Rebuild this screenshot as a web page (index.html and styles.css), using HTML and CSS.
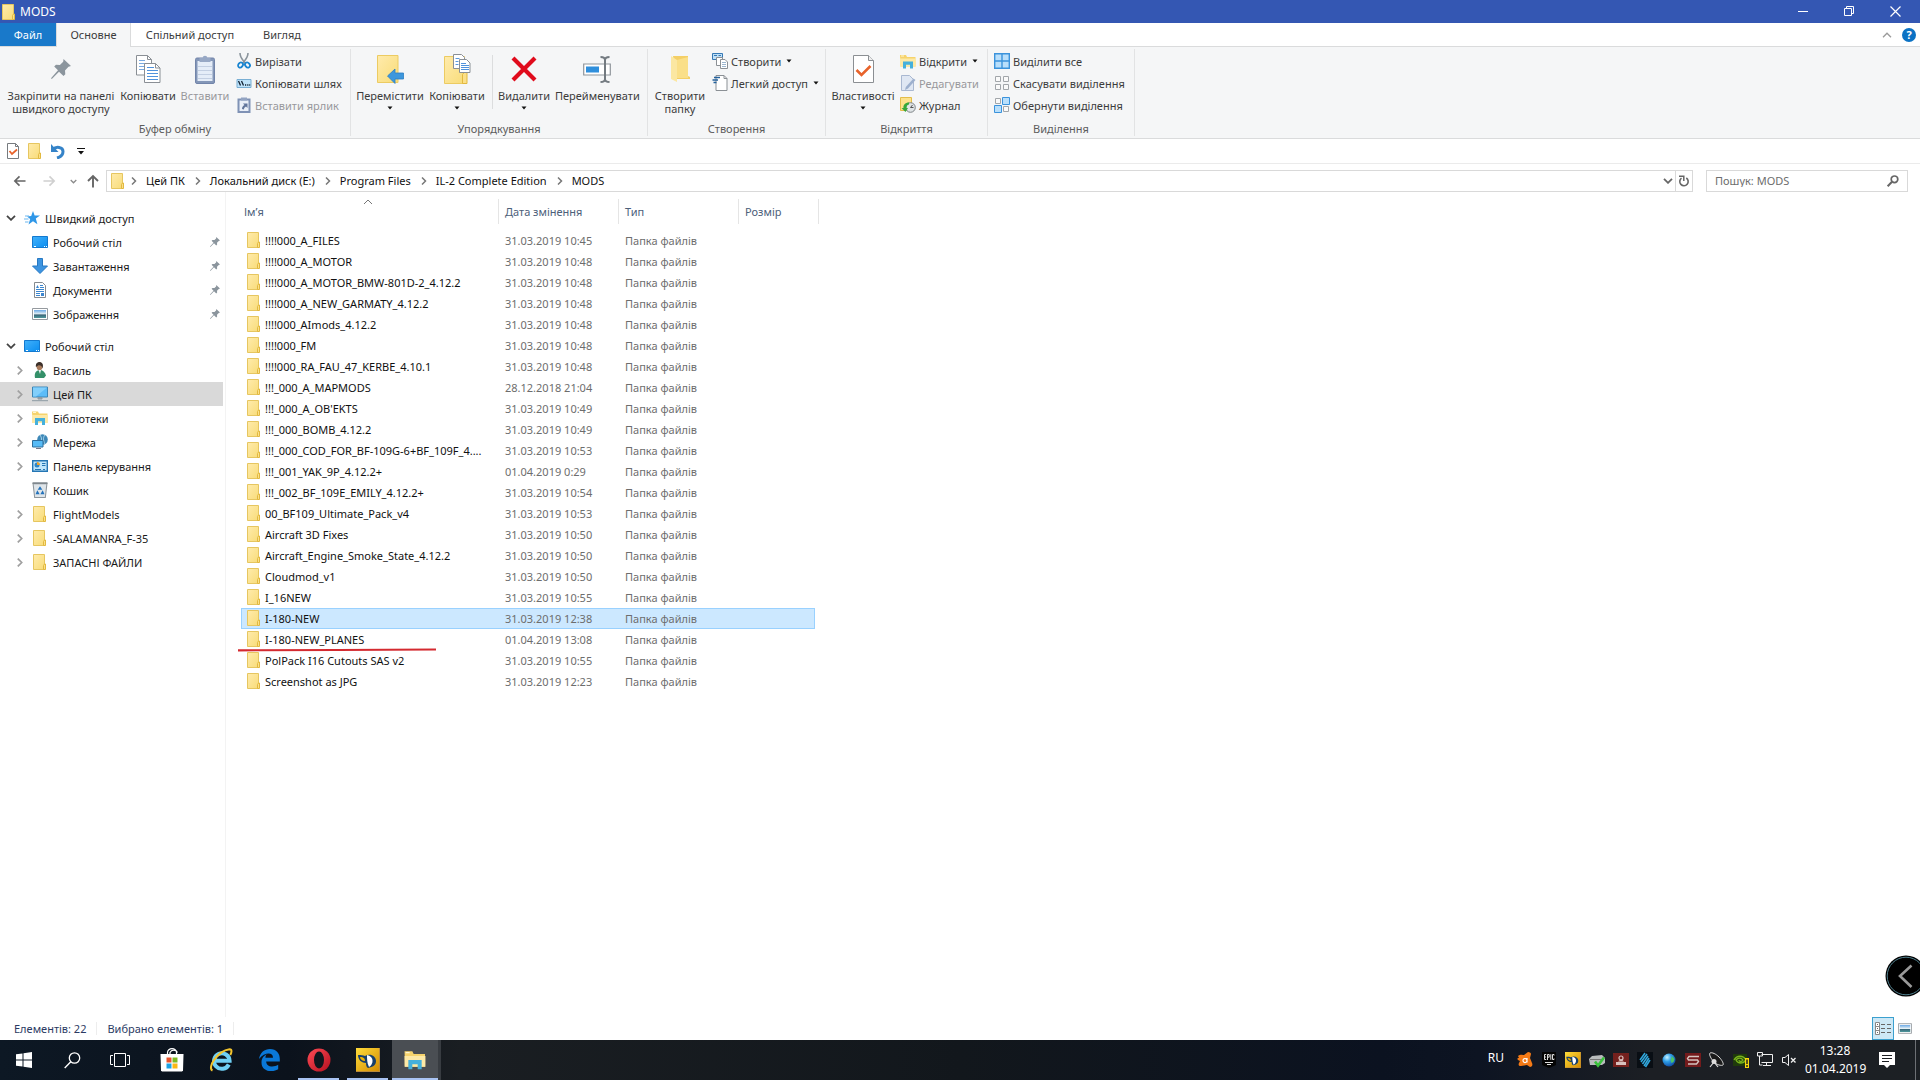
FILE: index.html
```html
<!DOCTYPE html>
<html lang="uk">
<head>
<meta charset="utf-8">
<meta name="viewport" content="width=device-width, initial-scale=1">
<title>MODS</title>
<link rel="stylesheet" href="styles.css">
</head>
<body>
<svg class="defs" aria-hidden="true">
  <defs>
    <linearGradient id="gFold" x1="0" y1="0" x2="1" y2="1"><stop offset="0" stop-color="#ffebac"/><stop offset="1" stop-color="#f8dc79"/></linearGradient>
    <linearGradient id="gBlue" x1="0" y1="0" x2="1" y2="1"><stop offset="0" stop-color="#41b1fb"/><stop offset="1" stop-color="#0a8df0"/></linearGradient>
    <linearGradient id="gPic" x1="0" y1="0" x2="0" y2="1"><stop offset="0" stop-color="#6aa9e6"/><stop offset=".5" stop-color="#e6f1f5"/><stop offset=".6" stop-color="#3a6478"/><stop offset="1" stop-color="#4f9a9c"/></linearGradient>
    <linearGradient id="gOpera" x1="0" y1="0" x2="1" y2="1"><stop offset="0" stop-color="#ff4b55"/><stop offset="1" stop-color="#b3101f"/></linearGradient>
    <linearGradient id="gGold" x1="0" y1="0" x2="1" y2="1"><stop offset="0" stop-color="#ffdc3a"/><stop offset="1" stop-color="#d28a00"/></linearGradient>
    <radialGradient id="gGlobe" cx=".35" cy=".3" r=".8"><stop offset="0" stop-color="#c9f3ff"/><stop offset=".4" stop-color="#2f9fe8"/><stop offset="1" stop-color="#0a3f9a"/></radialGradient>
  </defs>
  <symbol id="folder" viewBox="0 0 14 16"><path d="M.5.500h11v15H.5z" fill="url(#gFold)" stroke="#e6c660"/><path d="M10.500 15.500v-4l1-1.500h1v5.500z" fill="#fbe08a" stroke="#e2b93f"/></symbol>
  <symbol id="chev" viewBox="0 0 8 8"><path d="M2 0.500 5.500 4 2 7.500" fill="none" stroke="currentColor" stroke-width="1.500"/></symbol>
  <symbol id="chevdown" viewBox="0 0 10 6"><path d="M1 .8 5 4.800 9 .8" fill="none" stroke="currentColor" stroke-width="1.800"/></symbol>
  <symbol id="drop" viewBox="0 0 6 4"><path d="M.5.500h5L3 3.500z" fill="#111"/></symbol>
  <symbol id="pin" viewBox="0 0 20 20"><path d="M12.500 0 20 7l-2.500.8-3.500 3.700.3 3.700-1.800 1.800-4.500-4.300L.8 20 0 19.200 7 11.300 3.200 7.500 5 5.800l3.900.3L12.200 2.800z" fill="#8b959d"/></symbol>
  <symbol id="copy" viewBox="0 0 25 28"><path d="M.5.500h11l4 4v15.500H.5z" fill="#fff" stroke="#8a8f95"/><path d="M11.500.500v4h4" fill="none" stroke="#8a8f95"/><path d="M3 5.500h6M3 8.500h6M3 11.500h6M3 14.500h6" stroke="#7aaae0"/><path d="M8.500 8.500h11l4.500 4.500v14.500H8.500z" fill="#fff" stroke="#8a8f95"/><path d="M19.500 8.500v4.500H24" fill="none" stroke="#8a8f95"/><path d="M11 12.500h7M11 15.500h11M11 18.500h11M11 21.500h11M11 24.500h11" stroke="#4f92dc"/></symbol>
  <symbol id="paste" viewBox="0 0 20 29"><rect x=".5" y="3" width="19" height="25.500" rx="1.500" fill="#8497b8" stroke="#7285aa"/><path d="M2.500 6h15v20h-15z" fill="#e5edf8"/><path d="M3 11.500h14M3 15.500h14M3 19.500h14M3 23.500h14" stroke="#c3cfe2"/><path d="M4.500 3h3.200a2.300 2.300 0 0 1 4.600 0h3.200v4h-11z" fill="#97a8c5"/></symbol>
  <symbol id="cut" viewBox="0 0 14 16"><path d="M3 0c0 5 3 7 5.500 10.500M11 0c0 5-3 7-5.500 10.500" fill="none" stroke="#8a949c" stroke-width="1.600"/><ellipse cx="3.500" cy="12" rx="2.200" ry="2.700" fill="none" stroke="#1784d0" stroke-width="1.800" transform="rotate(40 3.500 12)"/><ellipse cx="10.500" cy="12" rx="2.200" ry="2.700" fill="none" stroke="#1784d0" stroke-width="1.800" transform="rotate(-40 10.500 12)"/></symbol>
  <symbol id="path" viewBox="0 0 15 9"><path d="M.5.500h14v8H.5z" fill="#bfe3fa" stroke="#79afd4"/><path d="m2 2 2 4.500M5 2l2 4.500" stroke="#123" stroke-width="1.300"/><path d="M8.500 6h1.200M10.700 6h1.200M12.700 6h1" stroke="#123" stroke-width="1.300"/></symbol>
  <symbol id="plink" viewBox="0 0 14 16"><path d="M1.500 2.500h11v12.500h-11z" fill="#e9eff8" stroke="#7f92b5" stroke-width="2"/><path d="M4 .5h6v3H4z" fill="#93a4c2"/><path d="M5 12c0-2 .7-3 2.500-4L6 6.500h4.500V11L9 9.500C7.500 10.500 7 11 7 12.500z" fill="#61759b"/></symbol>
  <symbol id="moveto" viewBox="0 0 27 29"><path d="M.5.500h20.500v27H.5z" fill="url(#gFold)" stroke="#eccb62"/><path d="M10.500 21 18 14v4h8.500v6H18v4.500z" fill="#3d97dd" stroke="#2c7fc4" stroke-width=".8"/></symbol>
  <symbol id="copyto" viewBox="0 0 27 30"><path d="M.5 2.500h20v27H.5z" fill="url(#gFold)" stroke="#eccb62"/><path d="M18.500 29.500v-9l2-2.500h2.500v11.500z" fill="#fbe08a" stroke="#e2b93f"/><path d="M9.500.500h8l3 3v11h-11z" fill="#fff" stroke="#8a8f95"/><path d="M11.500 4.500h4M11.500 7.500h3M11.500 10.500h3" stroke="#5a98dc"/><path d="M15.500 5.500h7l3.500 3.500v9.500H15.500z" fill="#fff" stroke="#8a8f95"/><path d="M17 9.500h5M17 11.500h8M17 13.500h8M17 15.500h8" stroke="#4f92dc"/></symbol>
  <symbol id="delete" viewBox="0 0 26 26"><path d="m2 2 22 22M24 2 2 24" stroke="#e00b1c" stroke-width="4.200"/></symbol>
  <symbol id="rename" viewBox="0 0 28 27"><path d="M.7 8h26.600v11H.7z" fill="#fff" stroke="#8f959b" stroke-width="1.200"/><path d="M3 10.500h13v6H3z" fill="#2f8fdc"/><path d="M17.500 1c3 0 4.500.8 4.500 3v19c0 2.200-1.500 3-4.500 3M26.500 1C23.500 1 22 1.800 22 4v19c0 2.200 1.500 3 4.500 3" fill="none" stroke="#737a80" stroke-width="2"/></symbol>
  <symbol id="newfold" viewBox="0 0 20 28"><path d="M3 1h15v20l2 1v2H6z" fill="#f4cf66"/><path d="M1 1l6 4v22L1 24z" fill="#fbe7a2"/><path d="M7 5 18 2v21H7z" fill="#fadf88"/></symbol>
  <symbol id="newitem" viewBox="0 0 16 16"><path d="M.5.500h10v6H.5z" fill="#bfe0f7" stroke="#3779b5"/><path d="M2 2.500h3M6.500 2.500H9" stroke="#3779b5"/><path d="M4.500 4.500h6v8h-6z" fill="#fff" stroke="#8b9095"/><path d="M8.500 6.500h4.500l2.500 2.500v6.500h-7z" fill="#fff" stroke="#8b9095"/><path d="M10 9.500h4M10 11.500h4M10 13.500h4" stroke="#9cb6cf"/></symbol>
  <symbol id="easy" viewBox="0 0 15 16"><path d="M3.500.500h8l3 3v12h-11z" fill="#fff" stroke="#8b9095"/><path d="M11.500.500v3h3" fill="none" stroke="#8b9095"/><path d="M1.500 2.500h6M0 5h5.500M1 7.500h3" stroke="#24629c" stroke-width="1.400"/></symbol>
  <symbol id="props" viewBox="0 0 21 28"><path d="M.5.500h15l5 5v22H.5z" fill="#fff" stroke="#8b8f93"/><path d="M15.500.500v5h5" fill="#eee" stroke="#8b8f93"/><path d="m3.500 15 5 5L17.500 11" fill="none" stroke="#e8632b" stroke-width="2.600"/></symbol>
  <symbol id="props-s" viewBox="0 0 12 16"><path d="M.5.500h8l3 3v12H.5z" fill="#fff" stroke="#777b7f"/><path d="M8.500.500v3h3" fill="none" stroke="#777b7f"/><path d="m2.500 8 2.500 3 5-4.500" fill="none" stroke="#e8632b" stroke-width="1.800"/></symbol>
  <symbol id="lib" viewBox="0 0 16 15"><path d="M0 1h6l1 2h8.500v9.500H.5z" fill="#f6d36c"/><path d="M1 2h3" stroke="#fff6cf"/><path d="M0 4.500h16v8H0z" fill="#fde9a6"/><path d="M3 14.500V7.500h10v7h-3v-3.800H6v3.800z" fill="#45b0dc"/></symbol>
  <symbol id="edit" viewBox="0 0 16 16"><path d="M1.500.500h8l4 4v11h-12z" fill="#dfe7f3" stroke="#a9b8d1"/><path d="M13.500 3.500 15.500 5 8 13.500 5 15l.8-3z" fill="#9db0ce"/></symbol>
  <symbol id="history" viewBox="0 0 16 16"><path d="M.5.500h11v13H.5z" fill="#fce28c" stroke="#e3bd4b"/><circle cx="10.500" cy="10.500" r="4.800" fill="#dfe4e6" stroke="#7e8487"/><path d="m10.500 10.500 2-2.500M10.500 10.500h3" stroke="#555"/><path d="M9 5.500C5 5.500 3 8 3.500 11H1.500l4 4 2.500-4H6.500c0-2 .5-3 2.500-3.500z" fill="#35a83a"/></symbol>
  <symbol id="selall" viewBox="0 0 16 16"><path d="M.7.700h14.600v14.600H.7zM8 .7v14.600M.7 8h14.600" fill="#b9dffb" stroke="#3b93dc" stroke-width="1.400"/></symbol>
  <symbol id="selnone" viewBox="0 0 16 16"><path d="M1.500 1.500h5v5h-5zM9.500 1.500h5v5h-5zM1.500 9.500h5v5h-5zM9.500 9.500h5v5h-5z" fill="#fafafa" stroke="#a2a6aa"/></symbol>
  <symbol id="selinv" viewBox="0 0 16 16"><path d="M1.500 1.500h5v5h-5zM9.500 9.500h5v5h-5z" fill="#fafafa" stroke="#a2a6aa"/><path d="M8.500.500h7v7h-7zM.5 8.500h7v7h-7z" fill="#b9dffb" stroke="#3b93dc"/></symbol>
  <symbol id="undo" viewBox="0 0 14 15"><path d="M2 5.500c3-3.500 10-2.500 10 2 0 3-2.500 5.500-6 6.500" fill="none" stroke="#3583c8" stroke-width="3"/><path d="M0 0v8h7.500z" fill="#3583c8"/></symbol>
  <symbol id="arrow" viewBox="0 0 14 12"><path d="M13.500 6H2M7 1 2 6l5 5" fill="none" stroke="currentColor" stroke-width="1.800"/></symbol>
  <symbol id="arrow-r" viewBox="0 0 14 12"><path d="M.5 6H12M7 1l5 5-5 5" fill="none" stroke="currentColor" stroke-width="1.800"/></symbol>
  <symbol id="star" viewBox="0 0 16 14"><path d="m9 0 1.600 4.600H16l-4.200 3 1.600 5.700L9 10.200l-4.500 3.300 1.700-5.400L3 5.500l4.200-.6z" fill="#2f97e8"/><path d="M1 5h4M0 8h4.500M1 11h3.500" stroke="#6db8f0" stroke-width="1.200"/></symbol>
  <symbol id="desk" viewBox="0 0 16 12"><path d="M.5.500h15v11H.5z" fill="url(#gBlue)" stroke="#1379cf"/><path d="M2 10.500h2M12 10.500h1M14 10.500h1" stroke="#fff"/></symbol>
  <symbol id="down" viewBox="0 0 16 16"><path d="M5.500.500h5v7.500h5L8 15.500.5 8h5z" fill="#3d94e0" stroke="#2679c3"/></symbol>
  <symbol id="doc" viewBox="0 0 12 16"><path d="M.5.500h8l3 3v12H.5z" fill="#fff" stroke="#858a8f"/><path d="M6 3.500h3M6 5.500h4M2 7.500h8M2 9.500h8M2 11.500h4M2 13.500h4" stroke="#3b86cf"/><path d="m2 6 1.500-3L5 6M7 11h3v3H7z" fill="#3b86cf"/></symbol>
  <symbol id="pic" viewBox="0 0 16 12"><path d="M.5.500h15v11H.5z" fill="#fff" stroke="#959a9f"/><path d="M2 2h12v8H2z" fill="url(#gPic)"/></symbol>
  <symbol id="user" viewBox="0 0 12 16"><path d="M1 16c-1-5 1-7.500 4.500-8C9 8 11 10 12 13.500L10 16z" fill="#349069"/><ellipse cx="5.500" cy="4.300" rx="3" ry="4" fill="#a97b5c"/><path d="M2 5C1 1.500 4-.5 6.500.2 9 .6 9.500 4 8.300 6.500 8 4 7 3 4.500 3.200z" fill="#3b302b"/><path d="m4.500 8 1.500 4 1-4z" fill="#eee"/></symbol>
  <symbol id="pc" viewBox="0 0 16 15"><path d="M.5.500h15v10H.5z" fill="#5cbcf8" stroke="#3c85b5"/><path d="M1 1h14L4 10H1z" fill="#82cffb"/><path d="M6 11h4v1.500H6zM0 14.200h16" fill="#97a5ae" stroke="#8d9aa3"/></symbol>
  <symbol id="net" viewBox="0 0 16 16"><circle cx="10.500" cy="5.500" r="5.300" fill="#3d88b8"/><path d="M8 1c2 3 2 5 0 8M13 1c-2 2-2 5 0 9" fill="none" stroke="#a9d3e8"/><path d="M.5 6.500h10.500v6.500H.5z" fill="#57bbf6" stroke="#2f6e9c"/><path d="M4 14.500h5" stroke="#778"/></symbol>
  <symbol id="cpl" viewBox="0 0 16 12"><path d="M.7.700h14.600v10.600H.7z" fill="#bfe5fb" stroke="#2476b4" stroke-width="1.400"/><circle cx="5" cy="5" r="2.500" fill="#2d86c8"/><path d="M5 5V2a3 3 0 0 1 3 3z" fill="#f0a22b"/><path d="M10 3.500h3.500M10 5.500h3.500M3 9.500h6M11 9.500h2" stroke="#2476b4"/></symbol>
  <symbol id="bin" viewBox="0 0 14 15"><path d="M.5 1.500h13L12 14.500H2z" fill="#dfe5e9" stroke="#8d959b"/><path d="M0 1h14" stroke="#7d858b" stroke-width="1.500"/><path d="m7 4 2.200 3.200H4.800zM2.800 11.500 4.500 7.700l2.200 3.800zM11.200 11.500 9.500 7.700l-2.200 3.800z" fill="#2372bb"/></symbol>
  <symbol id="parrot" viewBox="0 0 24 24"><path d="M0 0h24v24H0z" fill="url(#gGold)"/><path d="M23.500 0v23.500H0" fill="none" stroke="#b98a3a"/><path d="M2 7c3 0 5 0 7 1 5-3 11 0 11 5 0 4-3 6-8 7-2-1-2-4-2-5-4 0-8-3-8-8z" fill="#173f6b"/><path d="M11 7c7 1 7 9 2 12-2-4-2-8-2-12z" fill="#fff"/><path d="M4 9c4 0 5 2 5 4-3 0-5-2-5-4z" fill="#f0b400"/></symbol>
</svg>

<div class="window">
  <header class="titlebar">
    <svg class="i-folder"><use href="#folder"/></svg>
    <h1 class="title">MODS</h1>
    <div class="winctl">
      <button aria-label="Згорнути"><svg width="11" height="11"><path d="M0 5.500h10" stroke="#fff"/></svg></button>
      <button aria-label="Відновити"><svg width="11" height="11"><path d="M.5 2.500h7v7h-7zM2.500 2.500v-2h7v7h-2" fill="none" stroke="#fff"/></svg></button>
      <button aria-label="Закрити"><svg width="11" height="11"><path d="m.5.500 10 10M10.500.500l-10 10" stroke="#fff" stroke-width="1.200"/></svg></button>
    </div>
  </header>

  <nav class="tabs">
    <button class="tab file">Файл</button>
    <button class="tab active">Основне</button>
    <button class="tab share">Спільний доступ</button>
    <button class="tab view">Вигляд</button>
    <div class="tabs-end">
      <svg class="collapse" viewBox="0 0 10 6"><path d="M1 5.200 5 1.200l4 4" fill="none" stroke="#9a9a9a" stroke-width="1.300"/></svg>
      <button class="help" aria-label="Довідка">?</button>
    </div>
  </nav>

  <div class="ribbon">
    <section class="group g-clip">
      <div class="tools">
        <button class="big w116"><svg class="pinicon"><use href="#pin"/></svg><span>Закріпити на панелі<br>швидкого доступу</span></button>
        <button class="big w58"><svg width="25" height="28"><use href="#copy"/></svg><span>Копіювати</span></button>
        <button class="big w56 off"><svg width="20" height="29"><use href="#paste"/></svg><span>Вставити</span></button>
        <div class="stack">
          <button class="small"><svg width="16" height="16"><use href="#cut"/></svg>Вирізати</button>
          <button class="small"><svg width="16" height="9"><use href="#path"/></svg>Копіювати шлях</button>
          <button class="small off"><svg width="16" height="16"><use href="#plink"/></svg>Вставити ярлик</button>
        </div>
      </div>
      <h2>Буфер обміну</h2>
    </section>
    <section class="group g-org">
      <div class="tools">
        <button class="big w72"><svg width="27" height="29"><use href="#moveto"/></svg><span>Перемістити</span><svg class="drop"><use href="#drop"/></svg></button>
        <button class="big w62"><svg width="27" height="30"><use href="#copyto"/></svg><span>Копіювати</span><svg class="drop"><use href="#drop"/></svg></button>
        <i class="rule"></i>
        <button class="big w62"><svg width="26" height="26"><use href="#delete"/></svg><span>Видалити</span><svg class="drop"><use href="#drop"/></svg></button>
        <button class="big w84"><svg width="28" height="27"><use href="#rename"/></svg><span>Перейменувати</span></button>
      </div>
      <h2>Упорядкування</h2>
    </section>
    <section class="group g-new">
      <div class="tools">
        <button class="big w58"><svg width="20" height="28"><use href="#newfold"/></svg><span>Створити<br>папку</span></button>
        <div class="stack">
          <button class="small"><svg width="16" height="16"><use href="#newitem"/></svg>Створити<svg class="drop"><use href="#drop"/></svg></button>
          <button class="small"><svg width="16" height="16"><use href="#easy"/></svg>Легкий доступ<svg class="drop"><use href="#drop"/></svg></button>
        </div>
      </div>
      <h2>Створення</h2>
    </section>
    <section class="group g-open">
      <div class="tools">
        <button class="big w68"><svg width="21" height="28"><use href="#props"/></svg><span>Властивості</span><svg class="drop"><use href="#drop"/></svg></button>
        <div class="stack">
          <button class="small"><svg width="16" height="15"><use href="#lib"/></svg>Відкрити<svg class="drop"><use href="#drop"/></svg></button>
          <button class="small off"><svg width="16" height="16"><use href="#edit"/></svg>Редагувати</button>
          <button class="small"><svg width="16" height="16"><use href="#history"/></svg>Журнал</button>
        </div>
      </div>
      <h2>Відкриття</h2>
    </section>
    <section class="group g-sel">
      <div class="tools">
        <div class="stack">
          <button class="small"><svg width="16" height="16"><use href="#selall"/></svg>Виділити все</button>
          <button class="small"><svg width="16" height="16"><use href="#selnone"/></svg>Скасувати виділення</button>
          <button class="small"><svg width="16" height="16"><use href="#selinv"/></svg>Обернути виділення</button>
        </div>
      </div>
      <h2>Виділення</h2>
    </section>
  </div>

  <div class="quick">
    <button aria-label="Властивості"><svg width="12" height="16"><use href="#props-s"/></svg></button>
    <button aria-label="Створити папку"><svg class="i-folder"><use href="#folder"/></svg></button>
    <button aria-label="Скасувати"><svg width="14" height="15"><use href="#undo"/></svg></button>
    <button aria-label="Настроїти панель"><svg width="8" height="7"><path d="M0 .5h8" stroke="#111"/><path d="M1 3h6L4 6.500z" fill="#111"/></svg></button>
  </div>

  <div class="address">
    <div class="moves">
      <button class="back" aria-label="Назад"><svg width="13" height="12"><use href="#arrow"/></svg></button>
      <button class="fwd" aria-label="Вперед"><svg width="13" height="12"><use href="#arrow-r"/></svg></button>
      <button class="recent" aria-label="Останні розташування"><svg width="7" height="5"><use href="#chevdown"/></svg></button>
      <button class="up" aria-label="Вгору"><svg width="14" height="14" viewBox="0 0 14 14"><path d="M7 13.500V2M2 7l5-5 5 5" fill="none" stroke="currentColor" stroke-width="1.900"/></svg></button>
    </div>
    <div class="crumbs">
      <svg class="i-folder"><use href="#folder"/></svg>
      <svg class="sep first"><use href="#chev"/></svg><a href="#">Цей ПК</a>
      <svg class="sep"><use href="#chev"/></svg><a href="#">Локальний диск (E:)</a>
      <svg class="sep"><use href="#chev"/></svg><a href="#">Program Files</a>
      <svg class="sep"><use href="#chev"/></svg><a href="#">IL-2 Complete Edition</a>
      <svg class="sep"><use href="#chev"/></svg><a href="#">MODS</a>
      <button class="hist" aria-label="Попередні розташування"><svg width="10" height="6"><use href="#chevdown"/></svg></button>
      <button class="reload" aria-label="Оновити"><svg width="12" height="12" viewBox="0 0 12 12"><path d="M8.300 3A4.200 4.200 0 1 1 3.500 3.100" fill="none" stroke="#666" stroke-width="1.600"/><path d="M1 1.200h4.800V6" fill="none" stroke="#666" stroke-width="1.500"/></svg></button>
    </div>
    <label class="search">
      <input type="search" placeholder="Пошук: MODS" aria-label="Пошук: MODS">
      <svg width="12" height="12" viewBox="0 0 12 12"><circle cx="7.500" cy="4.300" r="3.300" fill="none" stroke="#666" stroke-width="1.700"/><path d="M5 6.800.7 11.300" stroke="#666" stroke-width="2"/></svg>
    </label>
  </div>

  <div class="main">
    <nav class="tree">
      <a href="#" class="node top"><svg class="exp open"><use href="#chevdown"/></svg><svg class="ico"><use href="#star"/></svg>Швидкий доступ</a>
      <a href="#" class="node"><i class="exp"></i><svg class="ico"><use href="#desk"/></svg>Робочий стіл<svg class="pin"><use href="#pin"/></svg></a>
      <a href="#" class="node"><i class="exp"></i><svg class="ico"><use href="#down"/></svg>Завантаження<svg class="pin"><use href="#pin"/></svg></a>
      <a href="#" class="node"><i class="exp"></i><svg class="ico"><use href="#doc"/></svg>Документи<svg class="pin"><use href="#pin"/></svg></a>
      <a href="#" class="node"><i class="exp"></i><svg class="ico"><use href="#pic"/></svg>Зображення<svg class="pin"><use href="#pin"/></svg></a>
      <a href="#" class="node top second"><svg class="exp open"><use href="#chevdown"/></svg><svg class="ico"><use href="#desk"/></svg>Робочий стіл</a>
      <a href="#" class="node"><svg class="exp"><use href="#chev"/></svg><svg class="ico"><use href="#user"/></svg>Василь</a>
      <a href="#" class="node current"><svg class="exp"><use href="#chev"/></svg><svg class="ico"><use href="#pc"/></svg>Цей ПК</a>
      <a href="#" class="node"><svg class="exp"><use href="#chev"/></svg><svg class="ico"><use href="#lib"/></svg>Бібліотеки</a>
      <a href="#" class="node"><svg class="exp"><use href="#chev"/></svg><svg class="ico"><use href="#net"/></svg>Мережа</a>
      <a href="#" class="node"><svg class="exp"><use href="#chev"/></svg><svg class="ico"><use href="#cpl"/></svg>Панель керування</a>
      <a href="#" class="node"><i class="exp"></i><svg class="ico"><use href="#bin"/></svg>Кошик</a>
      <a href="#" class="node"><svg class="exp"><use href="#chev"/></svg><svg class="ico"><use href="#folder"/></svg>FlightModels</a>
      <a href="#" class="node"><svg class="exp"><use href="#chev"/></svg><svg class="ico"><use href="#folder"/></svg>-SALAMANRA_F-35</a>
      <a href="#" class="node"><svg class="exp"><use href="#chev"/></svg><svg class="ico"><use href="#folder"/></svg>ЗАПАСНІ ФАЙЛИ</a>
    </nav>

    <section class="files">
      <table>
        <colgroup><col class="c-name"><col class="c-date"><col class="c-type"><col class="c-size"></colgroup>
        <thead><tr><th>Ім’я<svg class="sort" viewBox="0 0 10 6"><path d="M1 5 5 1l4 4" fill="none" stroke="#777"/></svg></th><th>Дата змінення</th><th>Тип</th><th>Розмір</th></tr></thead>
        <tbody>
          <tr><td><svg class="i-folder"><use href="#folder"/></svg>!!!!000_A_FILES</td><td>31.03.2019 10:45</td><td>Папка файлів</td><td></td></tr>
          <tr><td><svg class="i-folder"><use href="#folder"/></svg>!!!!000_A_MOTOR</td><td>31.03.2019 10:48</td><td>Папка файлів</td><td></td></tr>
          <tr><td><svg class="i-folder"><use href="#folder"/></svg>!!!!000_A_MOTOR_BMW-801D-2_4.12.2</td><td>31.03.2019 10:48</td><td>Папка файлів</td><td></td></tr>
          <tr><td><svg class="i-folder"><use href="#folder"/></svg>!!!!000_A_NEW_GARMATY_4.12.2</td><td>31.03.2019 10:48</td><td>Папка файлів</td><td></td></tr>
          <tr><td><svg class="i-folder"><use href="#folder"/></svg>!!!!000_AImods_4.12.2</td><td>31.03.2019 10:48</td><td>Папка файлів</td><td></td></tr>
          <tr><td><svg class="i-folder"><use href="#folder"/></svg>!!!!000_FM</td><td>31.03.2019 10:48</td><td>Папка файлів</td><td></td></tr>
          <tr><td><svg class="i-folder"><use href="#folder"/></svg>!!!!000_RA_FAU_47_KERBE_4.10.1</td><td>31.03.2019 10:48</td><td>Папка файлів</td><td></td></tr>
          <tr><td><svg class="i-folder"><use href="#folder"/></svg>!!!_000_A_MAPMODS</td><td>28.12.2018 21:04</td><td>Папка файлів</td><td></td></tr>
          <tr><td><svg class="i-folder"><use href="#folder"/></svg>!!!_000_A_OB'EKTS</td><td>31.03.2019 10:49</td><td>Папка файлів</td><td></td></tr>
          <tr><td><svg class="i-folder"><use href="#folder"/></svg>!!!_000_BOMB_4.12.2</td><td>31.03.2019 10:49</td><td>Папка файлів</td><td></td></tr>
          <tr><td><svg class="i-folder"><use href="#folder"/></svg>!!!_000_COD_FOR_BF-109G-6+BF_109F_4....</td><td>31.03.2019 10:53</td><td>Папка файлів</td><td></td></tr>
          <tr><td><svg class="i-folder"><use href="#folder"/></svg>!!!_001_YAK_9P_4.12.2+</td><td>01.04.2019 0:29</td><td>Папка файлів</td><td></td></tr>
          <tr><td><svg class="i-folder"><use href="#folder"/></svg>!!!_002_BF_109E_EMILY_4.12.2+</td><td>31.03.2019 10:54</td><td>Папка файлів</td><td></td></tr>
          <tr><td><svg class="i-folder"><use href="#folder"/></svg>00_BF109_Ultimate_Pack_v4</td><td>31.03.2019 10:53</td><td>Папка файлів</td><td></td></tr>
          <tr><td><svg class="i-folder"><use href="#folder"/></svg>Aircraft 3D Fixes</td><td>31.03.2019 10:50</td><td>Папка файлів</td><td></td></tr>
          <tr><td><svg class="i-folder"><use href="#folder"/></svg>Aircraft_Engine_Smoke_State_4.12.2</td><td>31.03.2019 10:50</td><td>Папка файлів</td><td></td></tr>
          <tr><td><svg class="i-folder"><use href="#folder"/></svg>Cloudmod_v1</td><td>31.03.2019 10:50</td><td>Папка файлів</td><td></td></tr>
          <tr><td><svg class="i-folder"><use href="#folder"/></svg>I_16NEW</td><td>31.03.2019 10:55</td><td>Папка файлів</td><td></td></tr>
          <tr class="selected"><td><svg class="i-folder"><use href="#folder"/></svg>I-180-NEW</td><td>31.03.2019 12:38</td><td>Папка файлів</td><td></td></tr>
          <tr><td><svg class="i-folder"><use href="#folder"/></svg>I-180-NEW_PLANES<svg class="mark" viewBox="0 0 198 4"><path d="M0 2.300 100 2l98-.500" fill="none" stroke="#d42a30" stroke-width="2.200"/></svg></td><td>01.04.2019 13:08</td><td>Папка файлів</td><td></td></tr>
          <tr><td><svg class="i-folder"><use href="#folder"/></svg>PolPack I16 Cutouts SAS v2</td><td>31.03.2019 10:55</td><td>Папка файлів</td><td></td></tr>
          <tr><td><svg class="i-folder"><use href="#folder"/></svg>Screenshot as JPG</td><td>31.03.2019 12:23</td><td>Папка файлів</td><td></td></tr>
        </tbody>
      </table>
    </section>
  </div>

  <footer class="status">
    <span>Елементів: 22</span><span>Вибрано елементів: 1</span>
    <div class="views">
      <button class="on" aria-label="Таблиця"><svg width="17" height="13"><path d="M.5.500h4v12h-4zM.5 4.500h4M.5 8.500h4" fill="#fff" stroke="#888"/><path d="M2 2.500h1M2 6.500h1M2 10.500h1M6 2.500h4M12 2.500h4M6 6.500h4M12 6.500h4M6 10.500h4M12 10.500h4" stroke="#666"/></svg></button>
      <button aria-label="Великі ескізи"><svg width="14" height="11"><use href="#pic"/></svg></button>
    </div>
  </footer>
  <button class="flyout" aria-label="Показати панель"><svg width="42" height="42"><circle cx="21" cy="21" r="20.500" fill="#000"/><circle cx="21" cy="21" r="18.800" fill="none" stroke="#4f7f8d"/><path d="M26.500 10.500 15 21l11.500 11" fill="none" stroke="#999" stroke-width="2.600"/></svg></button>
</div>

<div class="taskbar">
  <button class="task w48" aria-label="Пуск"><svg width="16" height="16"><path d="m0 2.300 6.500-.9v6.100H0zM7.500 1.200 16 0v7.500H7.500zM0 8.500h6.500v6.100L0 13.700zM7.500 8.500H16V16l-8.500-1.200z" fill="#fff"/></svg></button>
  <button class="task w48" aria-label="Пошук"><svg width="17" height="17"><circle cx="10.500" cy="6" r="5.200" fill="none" stroke="#fff" stroke-width="1.300"/><path d="M6.800 9.800.7 16" stroke="#fff" stroke-width="1.400"/></svg></button>
  <button class="task w48" aria-label="Подання завдань"><svg width="20" height="14"><path d="M4.500.500h11v13h-11zM3 2.500H.5v9H3M17 2.500h2.500v9H17" fill="none" stroke="#fff"/></svg></button>
  <div class="apps">
    <button class="task" aria-label="Store"><svg width="24" height="24"><path d="M7.500 6V4.500a4.500 3.800 0 0 1 9 0V6M10 6V4.500a4 3.500 0 0 1 7.500 0" fill="none" stroke="#fff" stroke-width="1.200"/><path d="M.5 6h23l-.5 16.500-1 1H2l-1-1z" fill="#fff"/><path d="M6.500 9.500h5v5h-5z" fill="#e8532b"/><path d="M12.500 9.500h5v5h-5z" fill="#7dba22"/><path d="M6.500 15.500h5v5h-5z" fill="#1ba2e4"/><path d="M12.500 15.500h5v5h-5z" fill="#fcb714"/></svg></button>
    <button class="task" aria-label="Internet Explorer"><svg width="24" height="24"><path d="M19.800 16.500a7.800 7.800 0 1 1 .8-3.700H7" fill="none" stroke="#6fd0f5" stroke-width="4"/><path d="M3.500 22.500C-2 20 8 3 20.500 1.200c3 0 2 3.300.8 5.800" fill="none" stroke="#f2c42e" stroke-width="2"/></svg></button>
    <button class="task" aria-label="Edge"><svg width="21" height="22"><path d="M0 10C1 3.500 5.500 0 11 0c6.500 0 9.800 4.500 9.800 10v2.500H7.200c.2 6 7.800 6 12 3.300v4.500C13 24 2.500 22.500 2.500 13.500 2.500 9 5 6.500 8 5.300 6.500 6.300 6.500 8 6.500 8.700H14c0-6-8.500-5.500-14 1.300z" fill="#0a78d7"/></svg></button>
    <button class="task run" aria-label="Opera"><svg width="24" height="24"><ellipse cx="12" cy="12" rx="11.500" ry="11.500" fill="url(#gOpera)"/><ellipse cx="12" cy="12" rx="5" ry="8.500" fill="#0f151d"/></svg></button>
    <button class="task run" aria-label="IL-2"><svg width="24" height="24"><use href="#parrot"/></svg></button>
    <button class="task run open" aria-label="Провідник"><svg width="22" height="20" viewBox="0 0 16 15"><use href="#lib"/></svg></button>
  </div>
  <div class="tray">
    <span class="lang">RU</span>
    <svg viewBox="0 0 16 16"><path d="M1 4c2-2 5-1 6-1l4-3c2 0 3 1 3 2l-1 4 2 5c1 2 0 4-2 4l-3-2-6 1c-2 0-3-1-2-3l1-2-2-1c-1-1-1-2 1-2z" fill="#f47a16"/><path d="M10 6v4.500M10 8.500a2 2 0 1 0 0 .1" stroke="#fff" stroke-width="1.200" fill="none"/></svg>
    <svg viewBox="0 0 16 16"><path d="M1 0h14v13l-7 3-7-3z" fill="#050505"/><path d="M3.500 2.500v5h1.700M3.500 5h1.500M3.500 2.500h1.700M6.500 8V2.500h1.700v2.700H6.500M9.800 2.200v5.600M13 3.500v-1h-1.500v5H13v-1M4 10.500h8M6 12.500h4" fill="none" stroke="#ddd"/></svg>
    <svg viewBox="0 0 24 24"><use href="#parrot"/></svg>
    <svg viewBox="0 0 16 16"><path d="m3 4 10-1 3 3v5l-3 2H1l-1-6z" fill="#b9bcbd"/><path d="M1 7.500h14" stroke="#777"/><path d="m6 9.500 3 4 6-8" fill="none" stroke="#3ac23c" stroke-width="2.600"/></svg>
    <svg viewBox="0 0 16 16"><path d="M0 1h16v14H0z" fill="#74201d"/><path d="M3 13V10h10v3zM5 9.500 8 7l3 2.500" fill="#d8c0bd"/><circle cx="8" cy="6" r="2" fill="none" stroke="#d8c0bd" stroke-width="1.200"/></svg>
    <svg viewBox="0 0 16 16"><path d="M0 0h16v16H0z" fill="#090e14"/><path d="M3 8 8 1M4 10l6-8M5.500 12 11 4M7 14l5-8M8.500 15 13 8" stroke="#31a7dc" stroke-width="1.500"/></svg>
    <svg viewBox="0 0 16 16"><circle cx="8" cy="8" r="6.500" fill="url(#gGlobe)"/><path d="M11 4l2.500 3-1 3-2 1-1-3z" fill="#4cc36a"/></svg>
    <svg viewBox="0 0 16 16"><path d="M0 1h16v14H0z" fill="#731b1c"/><path d="M14 4.500H4L2.500 6.500l1 1.500h9l1 1.500-2 2.500H3" fill="none" stroke="#d5c5c0" stroke-width="1.400"/></svg>
    <svg viewBox="0 0 16 16"><path d="M1 1c2-1 6 1 9 4s5 7 4 8-7 0-10-4-4-7-3-8z" fill="#1a1a1a" stroke="#ddd"/><circle cx="5" cy="9.500" r="2.500" fill="#ddd"/><path d="m1 15 4-5 4 5" stroke="#ddd" stroke-width="1.200" fill="none"/></svg>
    <svg viewBox="0 0 16 16"><path d="M0 2h14v12H0z" fill="#1f3a0b"/><path d="M1 8c3-5 9-5 12 0-3 4-8 4-10 0 2-2 5-3 7 0-1 2-4 2-4 0" fill="none" stroke="#7ab51d" stroke-width="1.300"/><path d="M12 6h4v10h-4z" fill="#f8d90b"/><path d="M14 7.500v4.500M14 13v2" stroke="#222" stroke-width="1.500"/></svg>
    <svg viewBox="0 0 16 16"><path d="M4.500 2.500h11v8h-11M9.500 10.500v3M6 13.500h8M.5.500h5v3.500h-5zM2.500 4v9h3" fill="none" stroke="#eee"/></svg>
    <svg viewBox="0 0 16 16"><path d="M1.500 5.500h2.500l3.500-3v11l-3.500-3H1.500z" fill="none" stroke="#eee"/><path d="m10 6 4.500 4.500M14.500 6 10 10.500" stroke="#eee" stroke-width="1.300"/></svg>
    <time class="clock">13:28<br>01.04.2019</time>
    <svg class="note" viewBox="0 0 16 16"><path d="M0 0h16v13h-5l-3 3-3-3H0z" fill="#fff"/><path d="M3 3.500h10M3 6.500h10M3 9.500h7" stroke="#1b1e22"/></svg>
    <i class="peek"></i>
  </div>
</div>
</body>
</html>
```
FILE: styles.css
```css
* { box-sizing: border-box; }

body {
  margin: 0;
  min-height: 100vh;
  display: flex;
  flex-direction: column;
  overflow-x: hidden;
  background: #fff;
  color: #1a1a1a;
  font: 11px/13px "Noto Sans", "Open Sans", sans-serif;
}

button {
  margin: 0;
  padding: 0;
  border: 0;
  background: none;
  color: inherit;
  font: inherit;
}

a { color: inherit; text-decoration: none; }
svg { flex: none; display: block; }
h1, h2 { margin: 0; font: inherit; }

.defs { position: absolute; width: 0; height: 0; }
.i-folder { width: 14px; height: 16px; }

.window {
  position: relative;
  flex: 1;
  display: flex;
  flex-direction: column;
  overflow: hidden;
}

/* Title bar */
.titlebar {
  display: flex;
  align-items: center;
  height: 23px;
  padding-left: 2px;
  background: #3457b3;
  color: #fff;
}
.title { margin-left: 4px; font-size: 12px; line-height: 16px; }
.winctl { display: flex; margin-left: auto; padding-right: 2px; }
.winctl button {
  display: flex;
  align-items: center;
  justify-content: center;
  width: 46px;
  height: 20px;
}

/* Tabs */
.tabs { display: flex; height: 23px; color: #3c3c3c; }
.tab { height: 23px; white-space: nowrap; }
.tab.file { width: 56px; background: #1979ca; color: #fff; }
.tab.active {
  position: relative;
  width: 75px;
  height: 24px;
  padding-bottom: 2px;
  border: solid #dadbdc;
  border-width: 0 1px;
  background: #f5f6f7;
}
.tab.share { width: 118px; }
.tab.view { width: 66px; }
.tabs-end { display: flex; align-items: center; gap: 10px; margin-left: auto; padding-right: 4px; }
.collapse { width: 10px; height: 6px; }
.help {
  width: 14px;
  height: 14px;
  border-radius: 50%;
  background: #0b72c4;
  color: #fff;
  font-weight: 700;
  line-height: 14px;
}

/* Ribbon */
.ribbon {
  display: flex;
  height: 93px;
  border: solid #dadbdc;
  border-width: 1px 0;
  background: #f5f6f7;
  color: #3c3c3c;
}
.group {
  display: flex;
  flex-direction: column;
  justify-content: space-between;
  margin: 2px 0;
  border-right: 1px solid #e2e3e4;
}
.group h2 { color: #5c5c5c; line-height: 14px; text-align: center; }
.g-clip { width: 351px; }
.g-org { width: 297px; }
.g-new { width: 178px; }
.g-open { width: 162px; }
.g-sel { width: 147px; }
.tools { display: flex; height: 70px; padding-left: 3px; }
.big {
  display: grid;
  grid-template-rows: 40px auto auto;
  align-content: start;
  justify-items: center;
  align-items: center;
  white-space: nowrap;
}
.big .drop { margin-top: 4px; }
.pinicon { width: 20px; height: 20px; }
.drop { width: 6px; height: 4px; }
.off { color: #98989c; }
.w48 { width: 48px; }
.w56 { width: 56px; }
.w58 { width: 58px; }
.w62 { width: 62px; }
.w68 { width: 68px; }
.w72 { width: 72px; }
.w84 { width: 84px; }
.w116 { width: 116px; }
.rule { width: 1px; height: 54px; margin: 6px 0 0 4px; background: #dcddde; }
.stack { display: flex; flex-direction: column; padding: 1px 0 0 3px; }
.small { display: flex; align-items: center; gap: 3px; height: 22px; white-space: nowrap; }
.small .drop { margin-left: 2px; }

/* Quick access bar */
.quick {
  display: flex;
  align-items: center;
  gap: 9px;
  height: 25px;
  padding-left: 7px;
  border-bottom: 1px solid #ebebeb;
}
.quick button:nth-child(4) { margin-left: 3px; }

/* Address row */
.address { display: flex; align-items: center; gap: 13px; padding: 6px 12px 0 0; }
.moves {
  display: flex;
  align-items: center;
  width: 93px;
  padding-left: 13px;
  color: #666;
}
.fwd { margin-left: 17px; color: #d0d0d0; }
.recent { margin-left: 14px; color: #8a8a8a; }
.up { margin-left: 9px; }
.crumbs {
  flex: 1;
  display: flex;
  align-items: center;
  height: 22px;
  padding: 0 0 1px 4px;
  border: 1px solid #d9d9d9;
  color: #111;
}
.sep { width: 8px; height: 8px; margin: 0 8px 0 9px; color: #777; }
.sep.first { margin: 0 8px 0 5px; }
.hist { margin-left: auto; padding-right: 2px; color: #666; }
.reload {
  display: flex;
  align-items: center;
  justify-content: center;
  width: 17px;
  height: 20px;
  border-left: 1px solid #d9d9d9;
}
.search {
  display: flex;
  align-items: center;
  width: 202px;
  height: 22px;
  padding: 0 8px 1px;
  border: 1px solid #d9d9d9;
}
.search input {
  flex: 1;
  min-width: 0;
  padding: 0;
  border: 0;
  outline: 0;
  background: none;
  font: inherit;
}
.search input::placeholder { color: #6d6d6d; }

/* Folder tree */
.main { flex: 1; display: flex; }
.tree { width: 226px; padding: 14px 2px 0 0; border-right: 1px solid #f3f3f3; }
.node { display: flex; align-items: center; height: 24px; padding-left: 14px; }
.node .ico { width: 16px; height: 16px; margin: 0 5px 0 6px; }
.node.top { padding-left: 6px; }
.node.top .ico { margin-left: 8px; }
.node.second { margin-top: 8px; }
.node.current { background: #d9d9d9; }
.exp { flex: none; width: 12px; height: 9px; color: #a0a0a0; }
.exp.open { width: 10px; height: 6px; color: #444; }
.node .pin { width: 10px; height: 10px; margin: 0 3px 0 auto; }

/* File list */
.files { flex: 1; padding: 7px 0 0 15px; }
table { width: 574px; table-layout: fixed; border-collapse: separate; border-spacing: 0; }
.c-name { width: 258px; }
.c-date { width: 120px; }
.c-type { width: 120px; }
.c-size { width: 76px; }
th {
  position: relative;
  height: 25px;
  padding: 0 0 0 6px;
  border-right: 1px solid #e5e5e5;
  color: #4c607a;
  font-weight: 400;
  text-align: left;
}
th:first-child { padding-left: 3px; }
th:last-child { border-right: 0; }
th:last-child::after {
  content: "";
  position: absolute;
  top: 0;
  right: -4px;
  height: 25px;
  border-right: 1px solid #e5e5e5;
}
.sort { position: absolute; top: 0; left: 122px; width: 10px; height: 6px; }
tbody::before { content: ""; display: block; height: 6px; }
td { height: 21px; padding: 0 0 0 6px; color: #6d6d6d; white-space: nowrap; }
td:first-child { position: relative; padding-left: 24px; color: #111; }
td .i-folder { position: absolute; top: 2px; left: 6px; }
.selected { background: #cce8ff; outline: 1px solid #99d1ff; outline-offset: -1px; }
.mark { position: absolute; top: 19px; left: -3px; width: 198px; height: 4px; }

/* Status bar */
.status { display: flex; align-items: center; height: 23px; padding-left: 14px; color: #2b3a63; }
.status span { margin-right: 10px; padding-right: 10px; border-right: 1px solid #ededed; }
.views { display: flex; align-items: center; gap: 4px; margin-left: auto; padding-right: 8px; }
.views .on {
  display: flex;
  align-items: center;
  justify-content: center;
  width: 22px;
  height: 23px;
  border: 1px solid #3ba0cf;
  background: #cde8f6;
}
.flyout { position: absolute; right: -7px; bottom: 43px; }

/* Taskbar */
.taskbar {
  display: flex;
  height: 40px;
  background: linear-gradient(90deg, #0d1824, #0b121c 15%, #1a1e22 24%, #12171c 50%, #0b1220 72%, #0d1422 77%, #1c1f24 86%, #1c2024);
  color: #fff;
}
.apps { display: flex; padding-left: 3px; }
.task {
  display: flex;
  align-items: center;
  justify-content: center;
  flex: none;
  width: 49px;
  height: 40px;
  border: solid transparent;
  border-width: 0 4px;
}
.task.w48 { width: 48px; }
.task.run { background: linear-gradient(#a9c3f2, #a9c3f2) 0 100% / 100% 2px no-repeat padding-box; }
.task.open {
  border-width: 0 3px 0 0;
  border-right-color: #383c41;
  background: linear-gradient(#a9c3f2, #a9c3f2) 0 100% / 100% 2px no-repeat, #4a4e53;
}
.tray { display: flex; align-items: center; gap: 8px; margin-left: auto; padding-right: 4px; }
.tray svg { width: 16px; height: 16px; }
.lang { margin-right: 5px; padding-bottom: 4px; font-size: 12px; line-height: 16px; }
.clock { width: 60px; font-size: 12px; line-height: 18px; text-align: center; white-space: nowrap; }
.tray .note { margin-left: 6px; }
.peek { width: 1px; height: 40px; margin-left: 12px; background: #6d7074; }
```
